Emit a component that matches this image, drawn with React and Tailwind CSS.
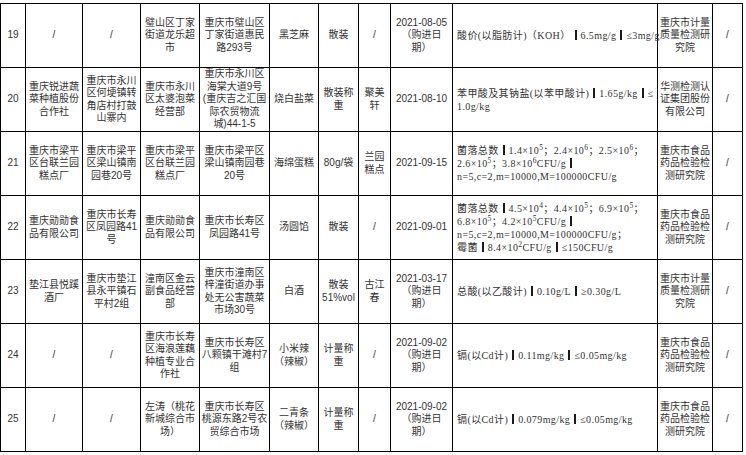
import React from 'react';

const cols = [25, 57, 58, 59, 70, 49, 40, 32, 62, 205, 55, 30];

// heavy separator bar used in the test-result column
const B = () => <span className="inline-block w-[2px] h-[10px] bg-[#1a1a1a] mx-[4px] align-[-1px]" />;

const rows = [
    {
        no: '19',
        cells: ['/', '/', '璧山区丁家\n街道龙乐超\n市', '重庆市璧山区\n丁家街道惠民\n路293号', '黑芝麻', '散装', '/', '2021-08-05\n（购进日\n期）'],
        test: <>酸价(以脂肪计)（KOH）<B />6.5mg/g<B />≤3mg/g</>,
        lab: '重庆市计量\n质量检测研\n究院',
    },
    {
        no: '20',
        cells: ['重庆锐进蔬\n菜种植股份\n合作社', '重庆市永川\n区何埂镇转\n角店村打鼓\n山寨内', '重庆市永川\n区太婆泡菜\n经营部', '重庆市永川区\n海棠大道9号\n(重庆吉之汇国\n际农贸物流\n城)44-1-5', '烧白盐菜', '散装称\n重', '聚美\n轩', '2021-08-10'],
        test: <>苯甲酸及其钠盐(以苯甲酸计)<B />1.65g/kg<B />≤{'\n'}1.0g/kg</>,
        lab: '华测检测认\n证集团股份\n有限公司',
    },
    {
        no: '21',
        cells: ['重庆市梁平\n区台联兰园\n糕点厂', '重庆市梁平\n区梁山镇南\n园巷20号', '重庆市梁平\n区台联兰园\n糕点厂', '重庆市梁平区\n梁山镇南园巷\n20号', '海绵蛋糕', '80g/袋', '兰园\n糕点', '2021-09-15'],
        test: (
            <>
                菌落总数<B />1.4×10<sup>5</sup>；2.4×10<sup>6</sup>；2.5×10<sup>6</sup>；{'\n'}2.6×10<sup>5</sup>；3.8×10<sup>6</sup>CFU/g<B />{'\n'}n=5,c=2,m=10000,M=100000CFU/g
            </>
        ),
        lab: '重庆市食品\n药品检验检\n测研究院',
    },
    {
        no: '22',
        cells: ['重庆勋勋食\n品有限公司', '重庆市长寿\n区凤园路41\n号', '重庆勋勋食\n品有限公司', '重庆市长寿区\n凤园路41号', '汤圆馅', '散装', '/', '2021-09-01'],
        test: (
            <>
                菌落总数<B />4.5×10<sup>4</sup>；4.4×10<sup>5</sup>；6.9×10<sup>5</sup>；{'\n'}6.8×10<sup>5</sup>；4.2×10<sup>5</sup>CFU/g<B />{'\n'}n=5,c=2,m=10000,M=100000CFU/g；{'\n'}霉菌<B />8.4×10<sup>2</sup>CFU/g<B />≤150CFU/g
            </>
        ),
        lab: '重庆市食品\n药品检验检\n测研究院',
    },
    {
        no: '23',
        cells: ['垫江县悦蹊\n酒厂', '重庆市垫江\n县永平镇石\n平村2组', '潼南区金云\n副食品经营\n部', '重庆市潼南区\n梓潼街道办事\n处无公害蔬菜\n市场30号', '白酒', '散装\n51%vol', '古江\n春', '2021-03-17\n（购进日\n期）'],
        test: <>总酸(以乙酸计)<B />0.10g/L<B />≥0.30g/L</>,
        lab: '重庆市计量\n质量检测研\n究院',
    },
    {
        no: '24',
        cells: ['/', '/', '重庆市长寿\n区海浪莲藕\n种植专业合\n作社', '重庆市长寿区\n八颗镇干滩村7\n组', '小米辣\n（辣椒）', '计量称\n重', '/', '2021-09-02\n（购进日\n期）'],
        test: <>镉(以Cd计)<B />0.11mg/kg<B />≤0.05mg/kg</>,
        lab: '重庆市食品\n药品检验检\n测研究院',
    },
    {
        no: '25',
        cells: ['/', '/', '左涛（桃花\n新城综合市\n场）', '重庆市长寿区\n桃源东路2号农\n贸综合市场', '二青条\n（辣椒）', '计量称\n重', '/', '2021-09-02\n（购进日\n期）'],
        test: <>镉(以Cd计)<B />0.079mg/kg<B />≤0.05mg/kg</>,
        lab: '重庆市食品\n药品检验检\n测研究院',
    },
];

const cell = "border border-black text-center align-middle px-[1px] whitespace-pre overflow-hidden";

export default function App() {
    return (
        <div className="bg-white w-[746px] h-[455px] pt-[3px] text-[#333] font-['Liberation_Sans','Noto_Sans_CJK_SC',sans-serif] text-[10px] leading-[12.5px]">
            <table className="table-fixed border-collapse w-[743px]">
                <colgroup>
                    {cols.map((w, i) => (
                        <col key={i} style={{ width: w }} />
                    ))}
                </colgroup>
                <tbody>
                    {rows.map((r) => (
                        <tr key={r.no} className="h-[64px]">
                            <td className={cell}>{r.no}</td>
                            {r.cells.map((c, i) => (
                                <td key={i} className={cell}>{c}</td>
                            ))}
                            <td className="border border-black text-left align-middle pl-[4px] pr-[1px] whitespace-pre leading-[13px] tracking-[0.4px] font-['Liberation_Serif','Noto_Sans_CJK_SC','DejaVu_Sans',serif]">
                                {r.test}
                            </td>
                            <td className={cell}>{r.lab}</td>
                            <td className={cell}>/</td>
                        </tr>
                    ))}
                </tbody>
            </table>
        </div>
    );
}
